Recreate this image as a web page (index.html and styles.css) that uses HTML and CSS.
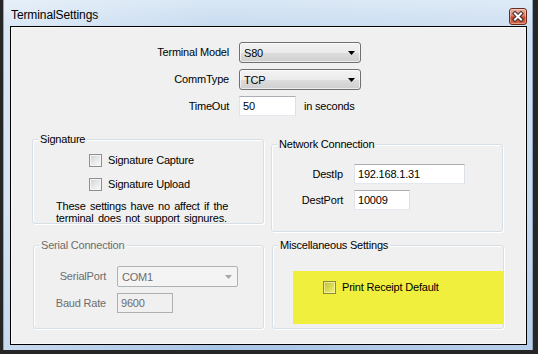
FILE: index.html
```html
<!DOCTYPE html>
<html>
<head>
<meta charset="utf-8">
<link rel="stylesheet" href="styles.css">
</head>
<body>
<div class="window">
  <div class="titlebar">
    <span class="title">TerminalSettings</span>
    <span class="close">
      <svg width="18" height="17" viewBox="0 0 18 17">
        <path d="M6 5.5 L12 11.5 M12 5.5 L6 11.5" stroke="#3a2a28" stroke-width="4" stroke-linecap="square"/>
        <path d="M6 5.5 L12 11.5 M12 5.5 L6 11.5" stroke="#ffffff" stroke-width="2" stroke-linecap="square"/>
      </svg>
    </span>
  </div>
  <div class="client">
    <div class="form">
      <span class="lbl">Terminal Model</span>
      <div class="combo"><span>S80</span><svg class="arrow" width="7" height="4" viewBox="0 0 7 4"><polygon points="0,0 7,0 3.5,4" fill="#000"/></svg></div>
      <span class="lbl">CommType</span>
      <div class="combo"><span>TCP</span><svg class="arrow" width="7" height="4" viewBox="0 0 7 4"><polygon points="0,0 7,0 3.5,4" fill="#000"/></svg></div>
      <span class="lbl">TimeOut</span>
      <div class="unit-row"><div class="textbox w57">50</div><span>in seconds</span></div>
    </div>

    <div class="groups">
      <div class="group sig">
        <div class="legend">Signature</div>
        <div class="check-row first"><span class="check"></span><span>Signature Capture</span></div>
        <div class="check-row second"><span class="check"></span><span>Signature Upload</span></div>
        <p class="note">These settings have no affect if the<br>terminal does not support signures.</p>
      </div>

      <div class="group net">
        <div class="legend">Network Connection</div>
        <div class="subform net-form">
          <span class="lbl">DestIp</span>
          <div class="textbox w111">192.168.1.31</div>
          <span class="lbl">DestPort</span>
          <div class="textbox w56">10009</div>
        </div>
      </div>

      <div class="group serial disabled">
        <div class="legend">Serial Connection</div>
        <div class="subform serial-form">
          <span class="lbl">SerialPort</span>
          <div class="combo dis w121"><span>COM1</span><svg class="arrow" width="7" height="4" viewBox="0 0 7 4"><polygon points="0,0 7,0 3.5,4" fill="#a7a7a7"/></svg></div>
          <span class="lbl">Baud Rate</span>
          <div class="textbox dis w56">9600</div>
        </div>
      </div>

      <div class="group misc">
        <div class="legend">Miscellaneous Settings</div>
        <div class="highlight">
          <div class="check-row"><span class="check tinted"></span><span>Print Receipt Default</span></div>
        </div>
      </div>
    </div>
  </div>
</div>
</body>
</html>
```

FILE: styles.css
```css
* { box-sizing: border-box; }

html, body {
  margin: 0;
  padding: 0;
}

body {
  width: 538px;
  height: 354px;
  background: #262626;
  font-family: "Liberation Sans", Arial, sans-serif;
  font-size: 11px;
  letter-spacing: -0.2px;
  color: #000;
  overflow: hidden;
}

.window {
  margin-left: 3px;
  width: 530px;
  height: 350px;
  padding: 0 5px 5px 6px;
  display: flex;
  flex-direction: column;
  background:
    linear-gradient(90deg, rgba(255,255,255,0.35) 0%, rgba(255,255,255,0) 40%, rgba(255,255,255,0.15) 100%),
    linear-gradient(180deg, #d9e7f5 0%, #c7dbf0 8%, #bfd5ed 60%, #a9c5e5 100%);
  border-left: 1px solid #8ea6c0;
  border-right: 1px solid #8ea6c0;
}

.titlebar {
  height: 26px;
  display: flex;
  justify-content: space-between;
  align-items: flex-start;
  padding-left: 1px;
}

.title {
  margin-top: 8px;
  font-size: 12px;
  line-height: 14px;
  color: #000;
  letter-spacing: -0.1px;
}

.close {
  margin-top: 8px;
  width: 18px;
  height: 17px;
  border: 1px solid #6b2a1c;
  border-radius: 3px;
  background: linear-gradient(180deg, #eab3a4 0%, #dc7a62 45%, #c8452b 55%, #d6664a 100%);
  display: flex;
  align-items: center;
  justify-content: center;
  box-shadow: inset 0 0 0 1px rgba(255,255,255,0.35);
}

.close svg {
  display: block;
  margin: -1px;
}

.client {
  flex: 1;
  border: 1px solid #000;
  background: #f0f0f0;
  box-shadow: inset 0 0 0 1px #f8f8f8;
  padding-top: 15px;
}

/* top form */
.form {
  display: grid;
  grid-template-columns: 218px auto;
  column-gap: 10px;
  row-gap: 6px;
  align-items: center;
}

.lbl {
  text-align: right;
  line-height: 13px;
}

.combo {
  width: 122px;
  height: 21px;
  border: 1px solid #707070;
  border-radius: 3px;
  background: linear-gradient(180deg, #f3f3f3 0%, #ebebeb 50%, #dddddd 51%, #cfcfcf 100%);
  display: flex;
  align-items: center;
  justify-content: space-between;
  padding: 0 4px 0 4px;
  box-shadow: inset 0 0 0 1px rgba(255,255,255,0.6);
}

.combo .arrow {
  display: block;
  margin-right: 1px;
}

.combo.dis {
  border-color: #adb2b5;
  background: #f4f4f4;
  color: #6d6d6d;
  box-shadow: none;
  border-radius: 2px;
}

.w121 { width: 121px; }

.textbox {
  height: 20px;
  border: 1px solid #abadb3;
  border-left-color: #e2e3ea;
  border-right-color: #dbdfe6;
  border-bottom-color: #e3e9ef;
  background: #fff;
  padding-left: 3px;
  display: flex;
  align-items: center;
}

.textbox.dis {
  background: #f0f0f0;
  border: 1px solid #afafaf;
  color: #6d6d6d;
}

.w57 { width: 57px; }
.w56 { width: 56px; }
.w111 { width: 111px; }

.unit-row {
  display: flex;
  align-items: center;
  gap: 8px;
}

/* group boxes */
.groups {
  margin: 23px 0 0 21px;
  display: grid;
  grid-template-columns: 232px 232px;
  column-gap: 7px;
  row-gap: 13px;
  align-items: start;
}

.group {
  border: 1px solid #d5dfe5;
  border-radius: 3px;
  box-shadow: 1px 1px 0 #ffffff, inset 1px 1px 0 #ffffff;
}

.legend {
  width: fit-content;
  margin: -7px 0 0 5px;
  padding: 0 2px;
  background: #f0f0f0;
  line-height: 13px;
}

.sig { height: 85px; }
.net { height: 88px; margin-top: 5px; }
.serial { height: 84px; margin-left: 1px; }
.misc { height: 84px; margin: 0 -1px 0 1px; }

.disabled .legend,
.disabled .lbl {
  color: #6d6d6d;
}

.check-row {
  display: flex;
  align-items: center;
  gap: 6px;
  height: 13px;
  line-height: 13px;
}

.sig .check-row { margin-left: 56px; }
.sig .first { margin-top: 8px; }
.sig .second { margin-top: 11px; }

.check {
  width: 13px;
  height: 13px;
  border: 1px solid #8e8f8f;
  background: linear-gradient(135deg, #cdd0d6 0%, #e6e8eb 50%, #fbfbfb 100%);
  box-shadow: inset 0 0 0 1px #f4f4f4;
  flex: none;
}

.check.tinted {
  border-color: #8b8a3a;
  background: linear-gradient(135deg, rgba(150,150,60,0.55) 0%, rgba(255,255,255,0.25) 100%);
  box-shadow: inset 0 0 0 1px rgba(255,255,200,0.6);
}

.note {
  margin: 9px 0 0 23px;
  line-height: 12px;
  word-spacing: 1.5px;
}

.subform {
  display: grid;
  column-gap: 11px;
  row-gap: 6px;
  align-items: center;
}

.net-form {
  grid-template-columns: 71px auto;
  margin-top: 13px;
}

.serial-form {
  grid-template-columns: 72px auto;
  margin-top: 14px;
}

.highlight {
  margin: 19px -1px 0 20px;
  height: 53px;
  background: #f0ef3d;
  padding: 10px 0 0 30px;
}
```
